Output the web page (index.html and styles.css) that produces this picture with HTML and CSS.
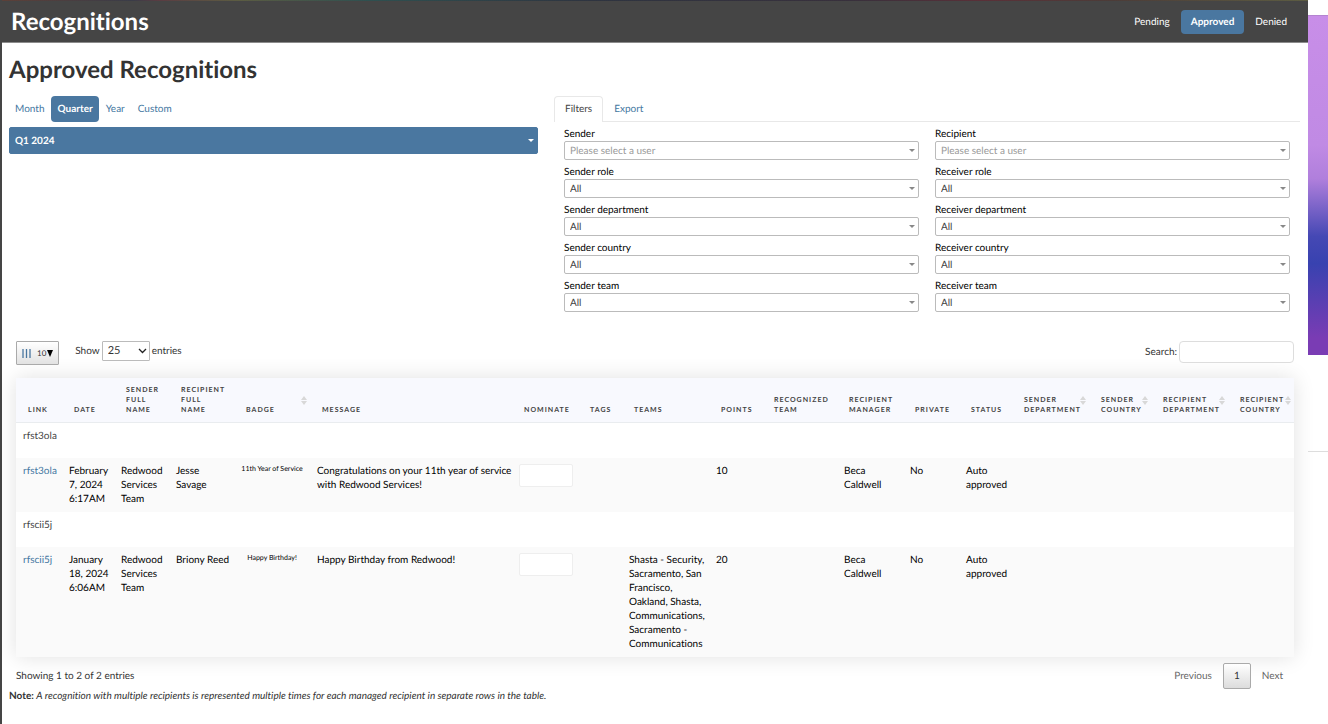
FILE: index.html
```
<!DOCTYPE html>
<html lang="en">
<head>
  <meta charset="utf-8">
  <meta content="initial-scale=1" name="viewport">
  <title>Approved Recognitions</title>
  <link rel="stylesheet" href="styles.css">
</head>
<body>
  <div class="page">
    <header class="topbar">
      <h2 class="topbar-title">Recognitions</h2>
      <nav class="topbar-nav">
        <a href="#pending">Pending</a>
        <a class="active" href="#approved">Approved</a>
        <a href="#denied">Denied</a>
      </nav>
    </header>
    <main class="content">
      <h1>Approved Recognitions</h1>
      <div class="controls">
        <section class="period">
          <nav class="pills">
            <a href="#month">Month</a>
            <a class="active" href="#quarter">Quarter</a>
            <a href="#year">Year</a>
            <a href="#custom">Custom</a>
          </nav>
          <div class="select quarter-select">
            <select aria-label="Quarter"><option>Q1 2024</option></select>
          </div>
        </section>
        <section class="filters">
          <nav class="tabs">
            <a class="active" href="#filters">Filters</a>
            <a href="#export">Export</a>
          </nav>
          <form class="filter-grid">
            <div class="field">
              <label for="sender">Sender</label>
              <div class="select"><select class="placeholder" id="sender"><option>Please select a user</option></select></div>
            </div>
            <div class="field">
              <label for="recipient">Recipient</label>
              <div class="select"><select class="placeholder" id="recipient"><option>Please select a user</option></select></div>
            </div>
            <div class="field">
              <label for="sender-role">Sender role</label>
              <div class="select"><select id="sender-role"><option>All</option></select></div>
            </div>
            <div class="field">
              <label for="receiver-role">Receiver role</label>
              <div class="select"><select id="receiver-role"><option>All</option></select></div>
            </div>
            <div class="field">
              <label for="sender-department">Sender department</label>
              <div class="select"><select id="sender-department"><option>All</option></select></div>
            </div>
            <div class="field">
              <label for="receiver-department">Receiver department</label>
              <div class="select"><select id="receiver-department"><option>All</option></select></div>
            </div>
            <div class="field">
              <label for="sender-country">Sender country</label>
              <div class="select"><select id="sender-country"><option>All</option></select></div>
            </div>
            <div class="field">
              <label for="receiver-country">Receiver country</label>
              <div class="select"><select id="receiver-country"><option>All</option></select></div>
            </div>
            <div class="field">
              <label for="sender-team">Sender team</label>
              <div class="select"><select id="sender-team"><option>All</option></select></div>
            </div>
            <div class="field">
              <label for="receiver-team">Receiver team</label>
              <div class="select"><select id="receiver-team"><option>All</option></select></div>
            </div>
          </form>
        </section>
      </div>

      <section class="results">
        <div class="toolbar">
          <button class="columns-button" type="button" aria-label="Visible columns">
            <svg width="9" height="9" viewBox="0 0 9 9"><path d="M1 0v9M4.500 0v9M8 0v9" stroke="#4a77a0" stroke-width="1.300"/></svg>
            <span>10</span>
            <svg width="6" height="7" viewBox="0 0 6 7"><path d="M0 0h6L3 7z" fill="#000"/></svg>
          </button>
          <div class="length">
            <label for="length">Show</label>
            <div class="length-select">
              <select id="length"><option>25</option></select>
              <svg width="9" height="6" viewBox="0 0 9 6"><path d="M1 1l3.500 3.500L8 1" fill="none" stroke="#222" stroke-width="1.300"/></svg>
            </div>
            <span>entries</span>
          </div>
          <div class="search">
            <label for="search">Search:</label>
            <input id="search" type="search">
          </div>
        </div>

        <table class="grid">
          <colgroup>
            <col class="c-link"><col class="c-date"><col class="c-sender"><col class="c-recipient"><col class="c-badge"><col class="c-message"><col class="c-nominate"><col class="c-tags"><col class="c-teams"><col class="c-points"><col class="c-rteam"><col class="c-manager"><col class="c-private"><col class="c-status"><col class="c-sdept"><col class="c-scountry"><col class="c-rdept"><col class="c-rcountry">
          </colgroup>
          <thead>
            <tr>
              <th>Link</th>
              <th>Date</th>
              <th>Sender Full Name</th>
              <th>Recipient Full Name</th>
              <th class="sortable">Badge</th>
              <th>Message</th>
              <th>Nominate</th>
              <th>Tags</th>
              <th>Teams</th>
              <th>Points</th>
              <th>Recognized Team</th>
              <th>Recipient Manager</th>
              <th>Private</th>
              <th>Status</th>
              <th class="sortable">Sender Department</th>
              <th class="sortable">Sender Country</th>
              <th class="sortable">Recipient Department</th>
              <th class="sortable">Recipient Country</th>
            </tr>
          </thead>
          <tbody>
            <tr class="group"><td colspan="18">rfst3ola</td></tr>
            <tr>
              <td><a href="#rfst3ola">rfst3ola</a></td>
              <td>February 7, 2024 6:17AM</td>
              <td>Redwood Services Team</td>
              <td>Jesse Savage</td>
              <td class="badge">11th Year of Service</td>
              <td class="message">Congratulations on your 11th year of service<br>with Redwood Services!</td>
              <td><input class="nominate" type="text" aria-label="Nominate rfst3ola"></td>
              <td></td>
              <td></td>
              <td>10</td>
              <td></td>
              <td>Beca Caldwell</td>
              <td>No</td>
              <td>Auto approved</td>
              <td></td><td></td><td></td><td></td>
            </tr>
            <tr class="group"><td colspan="18">rfscii5j</td></tr>
            <tr>
              <td><a href="#rfscii5j">rfscii5j</a></td>
              <td>January 18, 2024 6:06AM</td>
              <td>Redwood Services Team</td>
              <td>Briony Reed</td>
              <td class="badge">Happy Birthday!</td>
              <td class="message">Happy Birthday from Redwood!</td>
              <td><input class="nominate" type="text" aria-label="Nominate rfscii5j"></td>
              <td></td>
              <td>Shasta - Security, Sacramento, San Francisco, Oakland, Shasta, Communications, Sacramento - Communications</td>
              <td>20</td>
              <td></td>
              <td>Beca Caldwell</td>
              <td>No</td>
              <td>Auto approved</td>
              <td></td><td></td><td></td><td></td>
            </tr>
          </tbody>
        </table>

        <div class="table-footer">
          <p class="info">Showing 1 to 2 of 2 entries</p>
          <nav class="pagination">
            <a href="#previous">Previous</a>
            <a class="current" href="#1">1</a>
            <a href="#next">Next</a>
          </nav>
        </div>
      </section>
      <p class="note"><b>Note:</b> <i>A recognition with multiple recipients is represented multiple times for each managed recipient in separate rows in the table.</i></p>
    </main>
  </div>
  <aside class="backdrop">
    <div class="backdrop-art"></div>
    <div class="backdrop-panel"></div>
  </aside>
</body>
</html>
```
FILE: styles.css
```
* { box-sizing: border-box; }
body { background: #fff; color: #333; display: flex; font-family: Lato, sans-serif; font-size: 10px; font-variant-ligatures: none; line-height: 14px; margin: 0; min-height: 100vh; text-rendering: geometricPrecision; }
h1, h2, p { margin: 0; }
a { color: #4477a1; text-decoration: none; }
button, input, select { color: inherit; font: inherit; text-rendering: inherit; }

.page { border-left: 2px solid #454545; flex: 1; min-width: 0; }

/* Top bar */
.topbar { align-items: center; background: linear-gradient(90deg, #5c4038, #3a3c48 10%, #5a3c42 12%, #5c5c42 18%, #2f5050 28%, #2e3440 45%, #38303c 65%, #5a3038 75%, #4c3c38 85%, #5c5c42) 0 0 / 100% 1px no-repeat #454545; border-bottom: 1px solid #8c8c8c; display: flex; height: 43px; justify-content: space-between; padding: 2px 11px 0 9px; }
.topbar-title { color: #fff; font-size: 24px; line-height: 28px; }
.topbar-nav { display: flex; gap: 1px; }
.topbar-nav a { border-radius: 4px; color: #fff; padding: 5px 10px; }
.topbar-nav .active { background: #4a77a0; font-weight: 700; }

/* Period and filters */
.content { padding: 12px 8px 12px 7px; }
h1 { font-size: 24px; line-height: 29px; }
.controls { display: grid; gap: 16px; grid-template-columns: 529px 1fr; margin-top: 12px; }
.pills { display: flex; gap: 1px; }
.pills a { border-radius: 4px; padding: 6px; }
.pills .active { background: #4a77a0; color: #fff; font-weight: 700; }

.select { position: relative; }
.select::after { border: 3px solid transparent; border-bottom: 0; border-top-color: #888; content: ""; pointer-events: none; position: absolute; right: 4px; top: 8px; }
.select select { appearance: none; background: #fff; border: 1px solid #bbb; border-radius: 2px; color: #444; display: block; height: 19px; padding: 0 5px; width: 100%; }
.select .placeholder { color: #999; }
.quarter-select { margin-top: 5px; }
.quarter-select select { background: #4a77a0; border-color: #4a77a0; color: #fff; font-weight: 700; height: 27px; }
.quarter-select::after { border-top-color: #fff; top: 12px; }

.tabs { border-bottom: 1px solid #e8e8e8; display: flex; }
.tabs a { border: 1px solid transparent; border-bottom: 0; border-radius: 4px 4px 0 0; margin-bottom: -1px; padding: 5px 10px 6px; }
.tabs .active { background: #fff; border-color: #e8e8e8; color: #444; }
.filter-grid { color: #000; display: grid; gap: 5px 16px; grid-template-columns: 1fr 1fr; padding: 5px 10px 0; }
.field label { display: block; }

/* Results */
.results { padding: 0 6px 0 7px; }
.toolbar { align-items: flex-start; display: flex; margin-top: 29px; }
.columns-button { align-items: center; background: linear-gradient(#fff, #e2e2e2); border: 1px solid #aaa; border-radius: 1px; display: flex; font-size: 8px; gap: 1px; height: 24px; padding: 0 5px; }
.columns-button span { margin-left: 5px; }
.length { align-items: center; display: flex; gap: 2px; margin-left: 16px; }
.length-select { position: relative; }
.length-select select { appearance: none; background: #fff; border: 1px solid #bbb; border-radius: 1px; display: block; font-size: 11px; height: 20px; padding: 0 5px; width: 48px; }
.length-select svg { pointer-events: none; position: absolute; right: 3px; top: 7px; }
.search { align-items: center; display: flex; gap: 2px; margin-left: auto; }
.search input { border: 1px solid #ddd; border-radius: 4px; height: 22px; width: 115px; }

.grid { border-collapse: collapse; box-shadow: 0 0 20px rgba(0, 0, 0, .12); margin-top: 13px; table-layout: fixed; width: 100%; }
.grid th { background: #f8f9fe; border-bottom: 1px solid #e9ecef; color: #444; font-size: 7px; letter-spacing: 1px; line-height: 10px; padding: 7px 6px 7px 12px; text-align: left; text-transform: uppercase; vertical-align: bottom; }
.grid td { background: #fafafa; color: #000; padding: 6px 3px 6px 7px; vertical-align: top; }
.grid .group td { background: #fff; color: #444; height: 35px; }
.grid .badge { font-size: 7px; line-height: 10px; padding: 6px 7px; text-align: center; }
.grid .message { white-space: nowrap; }
.grid .sortable { padding-right: 10px; position: relative; }
.sortable::before, .sortable::after { border: 3px solid transparent; content: ""; position: absolute; right: 3px; }
.sortable::before { border-bottom: 4px solid #d8d8d8; border-top: 0; bottom: 50%; }
.sortable::after { border-bottom: 0; border-top: 4px solid #d8d8d8; margin-top: 1px; top: 50%; }
.nominate { background: #fff; border: 1px solid #eee; border-radius: 2px; display: block; height: 23px; width: 54px; }

.c-link { width: 46px; }
.c-date { width: 52px; }
.c-sender { width: 55px; }
.c-recipient { width: 65px; }
.c-badge { width: 76px; }
.c-message { width: 202px; }
.c-nominate { width: 66px; }
.c-tags { width: 44px; }
.c-teams { width: 87px; }
.c-points { width: 53px; }
.c-rteam { width: 75px; }
.c-manager { width: 66px; }
.c-private { width: 56px; }
.c-status { width: 53px; }
.c-sdept { width: 77px; }
.c-scountry { width: 62px; }
.c-rdept { width: 77px; }
.c-rcountry { width: 66px; }

.table-footer { align-items: flex-start; display: flex; justify-content: space-between; padding-top: 6px; }
.info { padding-top: 6px; }
.pagination { display: flex; }
.pagination a { border: 1px solid transparent; border-radius: 2px; color: #666; padding: 5px 10px; }
.pagination .current { background: linear-gradient(#fff, #dcdcdc); border-color: #aaa; color: #333; }

/* Page visible behind the panel */
.backdrop { width: 20px; }
.backdrop-art { background: linear-gradient(#c88ee8, #c08ae4 38%, #b07fdc 48%, #4548b4 65%, #3842b0 73%, #7a3cb4 95%); border-top: 1px solid #b484d0; height: 340px; margin-top: 15px; }
.backdrop-panel { border-bottom: 1px solid #ddd; height: 97px; }
```
